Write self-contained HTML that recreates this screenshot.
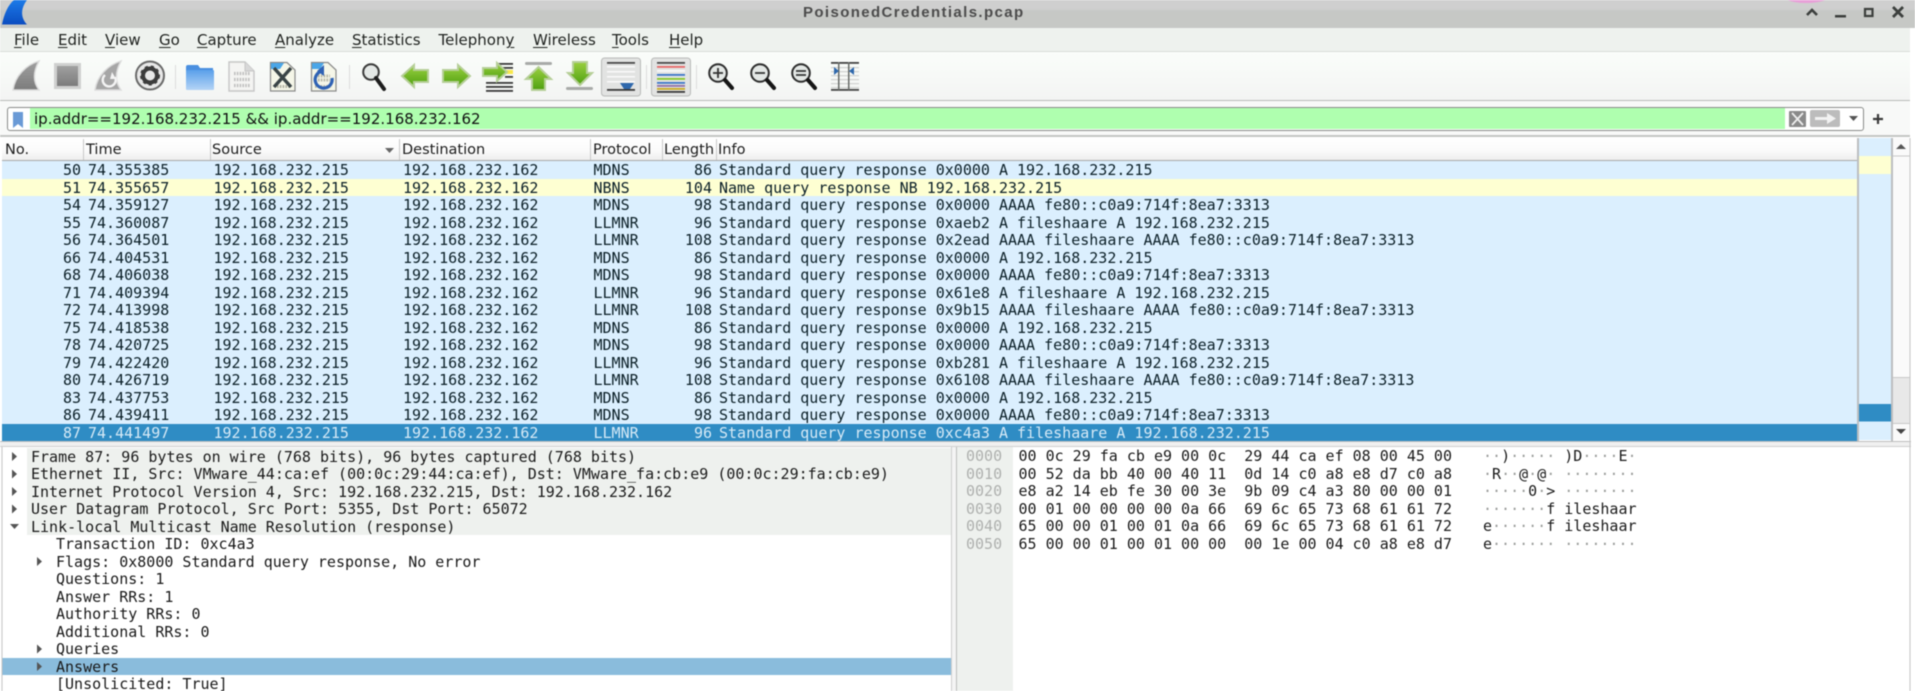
<!DOCTYPE html>
<html><head><meta charset="utf-8"><title>PoisonedCredentials.pcap</title>
<style>
html,body{margin:0;padding:0;background:#fff}
body{width:1915px;height:691px;position:relative;overflow:hidden;font-family:"DejaVu Sans","Liberation Sans",sans-serif;color:#222}
#w{position:absolute;left:0;top:0;width:1915px;height:691px;overflow:hidden;filter:blur(.4px)}
.a{position:absolute}
#title{left:0;top:0;width:1915px;height:28px;background:linear-gradient(#cfcfcf 0,#cfcfcf 9px,#c6c8c5 11px,#c6c8c5 100%)}
#ttext{left:803px;top:3px;font:bold 15px/19px "Liberation Sans",sans-serif;color:#4c4c4c;letter-spacing:1.38px;white-space:pre}
#menu{left:0;top:28px;width:1910px;height:24px;background:#eef2ee;border-bottom:1px solid #d8dcd8;box-sizing:border-box}
.m{position:absolute;top:30px;font-size:15px;line-height:21px;color:#1f221f;white-space:pre}
.m u{text-decoration-thickness:1px;text-underline-offset:2px}
#tool{left:0;top:52px;width:1910px;height:49px;background:linear-gradient(#fafdfa 0,#f7f9f7 50%,#f3f4f3 100%);border-bottom:1px solid #b9bcb9;box-sizing:border-box}
#frow{left:0;top:101px;width:1910px;height:36px;background:#f8f9f8;border-bottom:2px solid #c4c6c4;box-sizing:border-box}
#fbox{left:7px;top:107px;width:1855px;height:22px;border:1px solid #8a8c8a;border-radius:3px;background:#fff;box-sizing:content-box}
#fgreen{left:30px;top:108px;width:1755px;height:21px;background:#afffaf}
#ftext{left:34px;top:109px;font-size:15px;line-height:21px;color:#111;white-space:pre}
#head{left:2px;top:138px;width:1855px;height:23px;background:linear-gradient(#fff 0,#fbfbfb 55%,#eeeeee 100%);border-bottom:1px solid #a9abab;box-sizing:border-box}
.h{position:absolute;top:139px;font-size:14.5px;line-height:22px;color:#1c1c1c;white-space:pre}
.s{position:absolute;top:139px;width:1px;height:21px;background:#c8c8c8}
.r{position:absolute;left:2px;width:1855px;height:17.5px;background:#dbeffe;color:#0c2028;font:15px/17.5px "DejaVu Sans Mono","Liberation Mono",monospace;white-space:pre}
.r span{position:absolute;top:1px}
.r.y{background:#feffd2}
.r.sel{background:#2f8cc4;color:#d5e9f6}
.n{right:1776px}.t{left:86px}.f{left:211.5px}.d{left:401px}.p{left:591.5px}.l{right:1145px}.i{left:717px}
.q{position:absolute;left:2px;width:949px;height:17.5px;font:15px/17.5px "DejaVu Sans Mono","Liberation Mono",monospace;color:#1a1a1a;white-space:pre}
.q.g{background:linear-gradient(90deg,#fff 0,#fff 25px,#eef1ee 25px)}
.q.b{background:#8abcdc}
.q span{position:absolute;top:1px}
.k{left:29px}.c{left:54px}
.x{position:absolute;left:0;font:15px/17.5px "DejaVu Sans Mono","Liberation Mono",monospace;white-space:pre;color:#1a1a1a}
.x span{position:absolute;top:1px}
.o{left:966px;color:#aeb0ae}.hx{left:1018.5px}.as{left:1483px}
.x .o{color:#aeb0ae}
.x i{font-style:normal;color:#9a9c9a}
</style></head><body>
<div id="w">
<div class="a" id="title"></div>
<div class="a" id="ttext">PoisonedCredentials.pcap</div>
<div class="a" id="menu"></div>
<div class="m" style="left:14px"><u>F</u>ile</div>
<div class="m" style="left:58px"><u>E</u>dit</div>
<div class="m" style="left:105px"><u>V</u>iew</div>
<div class="m" style="left:159px"><u>G</u>o</div>
<div class="m" style="left:197px"><u>C</u>apture</div>
<div class="m" style="left:275px"><u>A</u>nalyze</div>
<div class="m" style="left:352px"><u>S</u>tatistics</div>
<div class="m" style="left:438.500px">Telephon<u>y</u></div>
<div class="m" style="left:533px"><u>W</u>ireless</div>
<div class="m" style="left:612px"><u>T</u>ools</div>
<div class="m" style="left:669px"><u>H</u>elp</div>
<div class="a" id="tool"></div>
<div class="a" id="frow"></div>
<div class="a" id="fbox"></div>
<div class="a" id="fgreen"></div>
<div class="a" id="ftext">ip.addr==192.168.232.215 &amp;&amp; ip.addr==192.168.232.162</div>

<div class="a" id="head"></div>
<div class="s" style="left:83px"></div><div class="s" style="left:210px"></div><div class="s" style="left:399px"></div><div class="s" style="left:590px"></div><div class="s" style="left:662px"></div><div class="s" style="left:716px"></div>
<div class="h" style="left:5px">No.</div><div class="h" style="left:86px">Time</div><div class="h" style="left:212px">Source</div><div class="h" style="left:402px">Destination</div><div class="h" style="left:593px">Protocol</div><div class="h" style="left:664px">Length</div><div class="h" style="left:718px">Info</div>

<div class="r" style="top:161px"><span class="n">50</span><span class="t">74.355385</span><span class="f">192.168.232.215</span><span class="d">192.168.232.162</span><span class="p">MDNS</span><span class="l">86</span><span class="i">Standard query response 0x0000 A 192.168.232.215</span></div>
<div class="r y" style="top:178.5px"><span class="n">51</span><span class="t">74.355657</span><span class="f">192.168.232.215</span><span class="d">192.168.232.162</span><span class="p">NBNS</span><span class="l">104</span><span class="i">Name query response NB 192.168.232.215</span></div>
<div class="r" style="top:196px"><span class="n">54</span><span class="t">74.359127</span><span class="f">192.168.232.215</span><span class="d">192.168.232.162</span><span class="p">MDNS</span><span class="l">98</span><span class="i">Standard query response 0x0000 AAAA fe80::c0a9:714f:8ea7:3313</span></div>
<div class="r" style="top:213.5px"><span class="n">55</span><span class="t">74.360087</span><span class="f">192.168.232.215</span><span class="d">192.168.232.162</span><span class="p">LLMNR</span><span class="l">96</span><span class="i">Standard query response 0xaeb2 A fileshaare A 192.168.232.215</span></div>
<div class="r" style="top:231px"><span class="n">56</span><span class="t">74.364501</span><span class="f">192.168.232.215</span><span class="d">192.168.232.162</span><span class="p">LLMNR</span><span class="l">108</span><span class="i">Standard query response 0x2ead AAAA fileshaare AAAA fe80::c0a9:714f:8ea7:3313</span></div>
<div class="r" style="top:248.5px"><span class="n">66</span><span class="t">74.404531</span><span class="f">192.168.232.215</span><span class="d">192.168.232.162</span><span class="p">MDNS</span><span class="l">86</span><span class="i">Standard query response 0x0000 A 192.168.232.215</span></div>
<div class="r" style="top:266px"><span class="n">68</span><span class="t">74.406038</span><span class="f">192.168.232.215</span><span class="d">192.168.232.162</span><span class="p">MDNS</span><span class="l">98</span><span class="i">Standard query response 0x0000 AAAA fe80::c0a9:714f:8ea7:3313</span></div>
<div class="r" style="top:283.5px"><span class="n">71</span><span class="t">74.409394</span><span class="f">192.168.232.215</span><span class="d">192.168.232.162</span><span class="p">LLMNR</span><span class="l">96</span><span class="i">Standard query response 0x61e8 A fileshaare A 192.168.232.215</span></div>
<div class="r" style="top:301px"><span class="n">72</span><span class="t">74.413998</span><span class="f">192.168.232.215</span><span class="d">192.168.232.162</span><span class="p">LLMNR</span><span class="l">108</span><span class="i">Standard query response 0x9b15 AAAA fileshaare AAAA fe80::c0a9:714f:8ea7:3313</span></div>
<div class="r" style="top:318.5px"><span class="n">75</span><span class="t">74.418538</span><span class="f">192.168.232.215</span><span class="d">192.168.232.162</span><span class="p">MDNS</span><span class="l">86</span><span class="i">Standard query response 0x0000 A 192.168.232.215</span></div>
<div class="r" style="top:336px"><span class="n">78</span><span class="t">74.420725</span><span class="f">192.168.232.215</span><span class="d">192.168.232.162</span><span class="p">MDNS</span><span class="l">98</span><span class="i">Standard query response 0x0000 AAAA fe80::c0a9:714f:8ea7:3313</span></div>
<div class="r" style="top:353.5px"><span class="n">79</span><span class="t">74.422420</span><span class="f">192.168.232.215</span><span class="d">192.168.232.162</span><span class="p">LLMNR</span><span class="l">96</span><span class="i">Standard query response 0xb281 A fileshaare A 192.168.232.215</span></div>
<div class="r" style="top:371px"><span class="n">80</span><span class="t">74.426719</span><span class="f">192.168.232.215</span><span class="d">192.168.232.162</span><span class="p">LLMNR</span><span class="l">108</span><span class="i">Standard query response 0x6108 AAAA fileshaare AAAA fe80::c0a9:714f:8ea7:3313</span></div>
<div class="r" style="top:388.5px"><span class="n">83</span><span class="t">74.437753</span><span class="f">192.168.232.215</span><span class="d">192.168.232.162</span><span class="p">MDNS</span><span class="l">86</span><span class="i">Standard query response 0x0000 A 192.168.232.215</span></div>
<div class="r" style="top:406px"><span class="n">86</span><span class="t">74.439411</span><span class="f">192.168.232.215</span><span class="d">192.168.232.162</span><span class="p">MDNS</span><span class="l">98</span><span class="i">Standard query response 0x0000 AAAA fe80::c0a9:714f:8ea7:3313</span></div>
<div class="r sel" style="top:423.5px"><span class="n">87</span><span class="t">74.441497</span><span class="f">192.168.232.215</span><span class="d">192.168.232.162</span><span class="p">LLMNR</span><span class="l">96</span><span class="i">Standard query response 0xc4a3 A fileshaare A 192.168.232.215</span></div>

<div class="a" style="left:0;top:441px;width:1911px;height:6px;background:#f0f0f0;border-top:1px solid #bdbdbd;border-bottom:1px solid #d0d0d0;box-sizing:border-box"></div>

<div class="q g" style="top:447.5px"><span class="k">Frame 87: 96 bytes on wire (768 bits), 96 bytes captured (768 bits)</span></div>
<div class="q g" style="top:465px"><span class="k">Ethernet II, Src: VMware_44:ca:ef (00:0c:29:44:ca:ef), Dst: VMware_fa:cb:e9 (00:0c:29:fa:cb:e9)</span></div>
<div class="q g" style="top:482.5px"><span class="k">Internet Protocol Version 4, Src: 192.168.232.215, Dst: 192.168.232.162</span></div>
<div class="q g" style="top:500px"><span class="k">User Datagram Protocol, Src Port: 5355, Dst Port: 65072</span></div>
<div class="q g" style="top:517.5px"><span class="k">Link-local Multicast Name Resolution (response)</span></div>
<div class="q" style="top:535px"><span class="c">Transaction ID: 0xc4a3</span></div>
<div class="q" style="top:552.5px"><span class="c">Flags: 0x8000 Standard query response, No error</span></div>
<div class="q" style="top:570px"><span class="c">Questions: 1</span></div>
<div class="q" style="top:587.5px"><span class="c">Answer RRs: 1</span></div>
<div class="q" style="top:605px"><span class="c">Authority RRs: 0</span></div>
<div class="q" style="top:622.5px"><span class="c">Additional RRs: 0</span></div>
<div class="q" style="top:640px"><span class="c">Queries</span></div>
<div class="q b" style="top:657.5px"><span class="c">Answers</span></div>
<div class="q" style="top:675px"><span class="c">[Unsolicited: True]</span></div>

<div class="a" style="left:951px;top:447px;width:6px;height:244px;background:#f4f4f4;border-left:1px solid #cfcfcf;border-right:1px solid #bdbdbd;box-sizing:border-box"></div>
<div class="a" style="left:957px;top:447px;width:56px;height:244px;background:#eef1ee"></div>

<div class="x" style="top:447px"><span class="o">0000</span><span class="hx">00 0c 29 fa cb e9 00 0c  29 44 ca ef 08 00 45 00</span><span class="as"><i>··</i>)<i>·····</i> )D<i>····</i>E<i>·</i></span></div>
<div class="x" style="top:464.5px"><span class="o">0010</span><span class="hx">00 52 da bb 40 00 40 11  0d 14 c0 a8 e8 d7 c0 a8</span><span class="as"><i>·</i>R<i>··</i>@<i>·</i>@<i>·</i> <i>········</i></span></div>
<div class="x" style="top:482px"><span class="o">0020</span><span class="hx">e8 a2 14 eb fe 30 00 3e  9b 09 c4 a3 80 00 00 01</span><span class="as"><i>·····</i>0<i>·</i>&gt; <i>········</i></span></div>
<div class="x" style="top:499.5px"><span class="o">0030</span><span class="hx">00 01 00 00 00 00 0a 66  69 6c 65 73 68 61 61 72</span><span class="as"><i>·······</i>f ileshaar</span></div>
<div class="x" style="top:517px"><span class="o">0040</span><span class="hx">65 00 00 01 00 01 0a 66  69 6c 65 73 68 61 61 72</span><span class="as">e<i>······</i>f ileshaar</span></div>
<div class="x" style="top:534.5px"><span class="o">0050</span><span class="hx">65 00 00 01 00 01 00 00  00 1e 00 04 c0 a8 e8 d7</span><span class="as">e<i>·······</i> <i>········</i></span></div>

<svg class="a" style="left:0;top:0" width="1915" height="691" viewBox="0 0 1915 691" xmlns="http://www.w3.org/2000/svg">
<defs>
<linearGradient id="bl" x1="0" y1="0" x2="0" y2="1"><stop offset="0" stop-color="#1d7be8"/><stop offset="1" stop-color="#0a4cc0"/></linearGradient>
<linearGradient id="fo" x1="0" y1="0" x2="0" y2="1"><stop offset="0" stop-color="#5aa0ea"/><stop offset="1" stop-color="#b4d4f6"/></linearGradient>
<linearGradient id="gr" x1="0" y1="0" x2="0" y2="1"><stop offset="0" stop-color="#a0a0a0"/><stop offset="1" stop-color="#7c7c7c"/></linearGradient>
<linearGradient id="gn" x1="0" y1="0" x2="0" y2="1"><stop offset="0" stop-color="#9ad040"/><stop offset="1" stop-color="#4fa010"/></linearGradient>
</defs>
<!-- logo and window controls -->
<path d="M2 24.500C4 14 8 5 14 0H27C21 8 20 17 27 24.500Z" fill="url(#bl)"/>
<path d="M1788 0C1796 4 1816 4 1825 0Z" fill="#e8a0d8"/>
<path d="M1807 15L1812 10L1817 15" fill="none" stroke="#3c3f3d" stroke-width="2.6"/>
<rect x="1835" y="15" width="11" height="2.5" fill="#3c3f3d"/>
<rect x="1865" y="9" width="7.5" height="7" fill="none" stroke="#3c3f3d" stroke-width="2.2"/>
<path d="M1893 7L1903 17M1903 7L1893 17" stroke="#3c3f3d" stroke-width="2.8"/>
<!-- capture icons -->
<path d="M13 90C15 76 26 65 39 61C33 72 33 82 39 90Z" fill="url(#gr)" stroke="#dcdcdc" stroke-width="1.4"/>
<rect x="54" y="63" width="27" height="26" fill="#cfd0cf"/><rect x="57" y="66" width="21" height="20" fill="url(#gr)"/>
<path d="M95 90C97 76 108 65 121 61C115 72 115 82 121 90Z" fill="#a6a6a6" stroke="#dcdcdc" stroke-width="1.4"/>
<path d="M105 75A6.5 6.5 0 1 0 115 77" fill="none" stroke="#f4f4f4" stroke-width="2.4"/>
<path d="M112 72L116 79L110 79Z" fill="#f4f4f4"/>
<circle cx="150" cy="75.5" r="14" fill="#e8e8e8" stroke="#6a6a6a" stroke-width="2"/>
<circle cx="150" cy="75.5" r="7" fill="none" stroke="#3c3c3c" stroke-width="4"/>
<circle cx="150" cy="75.5" r="8.8" fill="none" stroke="#3c3c3c" stroke-width="2.4" stroke-dasharray="3 3"/>
<rect x="175" y="65" width="1" height="24" fill="#dcdcdc"/>
<!-- file icons -->
<path d="M186 67Q186 65 188 65H198L200 68H213V89H186Z" fill="#4a8fe0"/>
<rect x="186" y="70" width="28" height="20" rx="1" fill="url(#fo)"/>
<path d="M229 62H245L254 71V91H229Z" fill="#f4f4f2" stroke="#c6c6c6" stroke-width="1.4"/>
<path d="M245 62V71H254" fill="#d8d8d8" stroke="#c6c6c6"/>
<g stroke="#c0c0c0" stroke-width="3.2" stroke-dasharray="1.6 1.2" fill="none"><path d="M234 73.500H250M234 79.500H250M234 85.500H250"/></g>
<path d="M270.500 62.500H287L295 70V91H270.500Z" fill="#f5f6e8" stroke="#8a8a8a" stroke-width="1.200"/>
<path d="M271 63H284L280 69H271Z" fill="#4aa6e8"/>
<path d="M277 86.500H291" stroke="#b0b0a0" stroke-width="3" stroke-dasharray="1.600 1.200"/>
<path d="M274 68L291 87M291 68L274 87" stroke="#3a4446" stroke-width="3.400"/>
<path d="M311.500 62.500H328L336 70V91H311.500Z" fill="#f5f6e8" stroke="#8a8a8a" stroke-width="1.200"/>
<path d="M312 63H324L320 69H312Z" fill="#4aa6e8"/>
<path d="M315 86.500H332M318 76H330M318 80H330" stroke="#b8b8a8" stroke-width="3" stroke-dasharray="1.600 1.200"/>
<path d="M321 71.500A8.500 8.500 0 1 0 332 78" fill="none" stroke="#2f62b4" stroke-width="3.200"/>
<path d="M324 65L324 76L317 71Z" fill="#2f62b4"/>
<rect x="349" y="65" width="1" height="24" fill="#dcdcdc"/>
<!-- find and navigation -->
<circle cx="371" cy="72" r="7.800" fill="#e4e8e6" stroke="#3a3a3a" stroke-width="2"/>
<path d="M376 78L384 89" stroke="#1d1d1d" stroke-width="4" stroke-linecap="round"/>
<path d="M402 76L414 65V70H428V82H414V87Z" fill="url(#gn)" stroke="#b6cf98" stroke-width="2"/>
<path d="M470 76L458 65V70H443V82H458V87Z" fill="url(#gn)" stroke="#b6cf98" stroke-width="2"/>
<!-- go to packet -->
<g fill="#3a3a3a"><rect x="497" y="63" width="16" height="1.800"/><rect x="503" y="67" width="10" height="1.800"/><rect x="486" y="82" width="27" height="1.800"/><rect x="486" y="86" width="27" height="1.800"/><rect x="486" y="90" width="27" height="1.800"/></g>
<rect x="505" y="70" width="8" height="4" fill="#f8e84a"/>
<rect x="505" y="76" width="8" height="1.800" fill="#3a3a3a"/>
<path d="M483 68H497V63L507 72L497 81V76H483Z" fill="url(#gn)" stroke="#b6cf98" stroke-width="2"/>
<!-- first -->
<rect x="525" y="62" width="27" height="3" rx="1.500" fill="#a8aaa8"/>
<path d="M538.500 67L551 79H545V90H532V79H526Z" fill="url(#gn)" stroke="#b6cf98" stroke-width="2"/>
<!-- last -->
<path d="M580 85L592 73H587V62H573V73H568Z" fill="url(#gn)" stroke="#b6cf98" stroke-width="2"/>
<rect x="566" y="87" width="27" height="3" rx="1.500" fill="#a8aaa8"/>
<!-- autoscroll button -->
<rect x="601.500" y="58" width="39" height="38" rx="3" fill="#e2e3e2" stroke="#b8bab8"/>
<rect x="607" y="62" width="28" height="1.800" fill="#4a4a4a"/>
<g fill="#fafafa"><rect x="607" y="66" width="28" height="1.500"/><rect x="607" y="71" width="28" height="1.500"/><rect x="607" y="76" width="28" height="1.500"/><rect x="607" y="81" width="28" height="1.500"/></g>
<rect x="607" y="89" width="28" height="1.800" fill="#3a3a3a"/>
<path d="M620 83H634L630 89H624Z" fill="#2f68ac"/>
<rect x="646" y="65" width="1" height="24" fill="#dcdcdc"/>
<!-- colorize button -->
<rect x="651.500" y="58" width="39" height="38" rx="3" fill="#e2e3e2" stroke="#b8bab8"/>
<rect x="657" y="62" width="28" height="1.800" fill="#4a4a4a"/>
<rect x="657" y="66" width="28" height="1.800" fill="#e86868"/>
<rect x="657" y="70" width="28" height="1.800" fill="#f8f8f8"/>
<rect x="657" y="74" width="28" height="1.800" fill="#3c76c8"/>
<rect x="657" y="78" width="28" height="1.800" fill="#86c828"/>
<rect x="657" y="82" width="28" height="1.800" fill="#3c76c8"/>
<rect x="657" y="85" width="28" height="1.800" fill="#9070a8"/>
<rect x="657" y="88" width="28" height="1.800" fill="#c8a820"/>
<rect x="657" y="91" width="28" height="1.800" fill="#3a3a3a"/>
<rect x="696" y="65" width="1" height="24" fill="#dcdcdc"/>
<!-- zoom -->
<g fill="#e4e8e6" stroke="#2e2e2e" stroke-width="2"><circle cx="718" cy="73" r="8.800"/><circle cx="760" cy="73" r="8.800"/><circle cx="801" cy="73" r="8.800"/></g>
<g stroke="#151515" stroke-width="4" stroke-linecap="round"><path d="M725 80L732 88M767 80L774 88M808 80L815 88"/></g>
<g stroke="#333" stroke-width="1.800"><path d="M713 73H723M718 68V78M755 73H765M796 71H806M796 75H806"/></g>
<!-- resize -->
<g fill="#d2d4d2"><rect x="831" y="67" width="28" height="1.300"/><rect x="831" y="71" width="28" height="1.300"/><rect x="831" y="75" width="28" height="1.300"/><rect x="831" y="79" width="28" height="1.300"/><rect x="831" y="83" width="28" height="1.300"/><rect x="831" y="87" width="28" height="1.300"/></g>
<rect x="831" y="62" width="28" height="1.800" fill="#444"/><rect x="831" y="89" width="28" height="1.800" fill="#444"/>
<rect x="838" y="62" width="1.500" height="28" fill="#6a6e6a"/><rect x="848" y="62" width="1.500" height="28" fill="#6a6e6a"/>
<path d="M834 67L839 71L834 75ZM854 67L849 71L854 75Z" fill="#2f68ac"/>
<!-- filter widgets -->
<path d="M13 112H23V128L18 124L13 128Z" fill="#6a9ad6"/>
<rect x="1789" y="111" width="17" height="16" rx="1" fill="#8a8a8a"/>
<path d="M1792 113L1803 125M1803 113L1792 125" stroke="#eee" stroke-width="1.800"/>
<rect x="1810" y="110" width="30" height="17" rx="2" fill="#bcbcbc"/>
<path d="M1815 117H1827V113L1836 118.500L1827 124V120H1815Z" fill="#f2f2f2"/>
<path d="M1849 116H1858L1853.500 121Z" fill="#555"/>
<path d="M1878 114V124M1873 119H1883" stroke="#3a3a3a" stroke-width="2.200"/>
<!-- sort arrow -->
<path d="M385 148H394L389.500 153Z" fill="#666"/>
<!-- intelligent scrollbar -->
<rect x="1857" y="138" width="2" height="303" fill="#bcbec0"/>
<rect x="1859" y="138" width="32" height="302" fill="#dbeffe"/>
<rect x="1859" y="156" width="32" height="18" fill="#feffd2"/>
<rect x="1859" y="404" width="32" height="17.500" fill="#2f8cc4"/>
<rect x="1891" y="138" width="2" height="303" fill="#bcbec0"/>
<rect x="1893" y="138" width="17" height="302" fill="#fafafa"/>
<rect x="1893" y="378" width="17" height="45" fill="#e8e8e8"/>
<path d="M1893 156H1910M1893 377.500H1910M1893 423.500H1910" stroke="#c8c8c8"/>
<rect x="1909.500" y="138" width="1" height="553" fill="#c4c4c4"/>
<path d="M1896 149H1906L1901 144Z" fill="#555"/>
<path d="M1896 429H1906L1901 434Z" fill="#444"/>
<!-- tree arrows -->
<g fill="#555">
<path d="M12 452L17 456.500L12 461Z"/><path d="M12 469.500L17 474L12 478.500Z"/><path d="M12 487L17 491.500L12 496Z"/><path d="M12 504.500L17 509L12 513.500Z"/>
<path d="M10 524H19L14.500 529Z"/>
<path d="M37 557L42 561.500L37 566Z"/><path d="M37 644.500L42 649L37 653.500Z"/><path d="M37 662L42 666.500L37 671Z"/>
</g>
<rect x="1.500" y="447" width="1" height="244" fill="#c4c4c4"/>
</svg>
</div>
</body></html>
